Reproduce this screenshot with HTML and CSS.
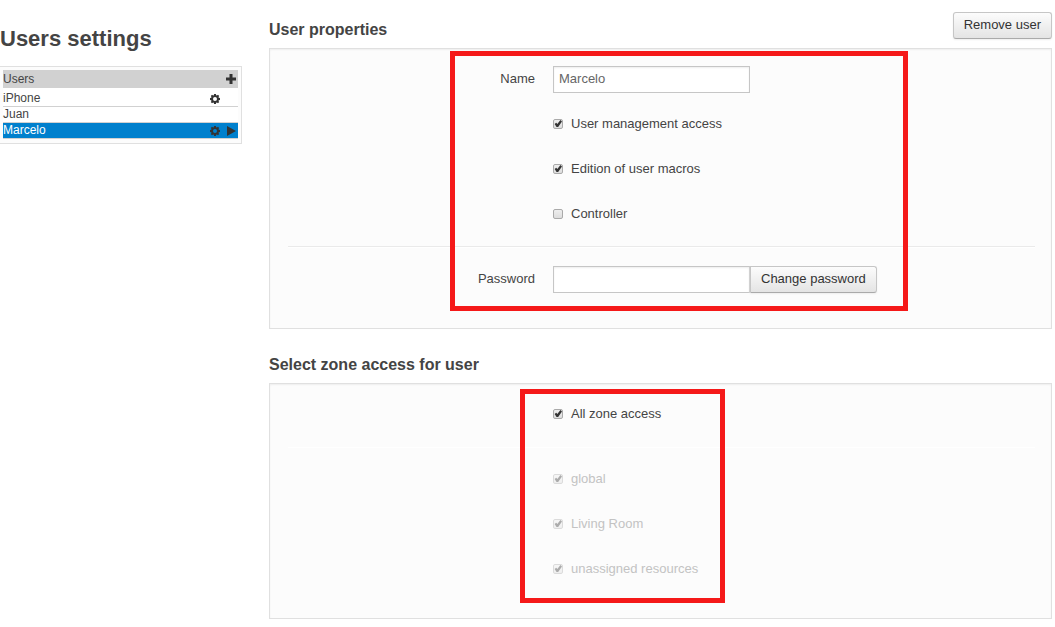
FILE: index.html
```
<!DOCTYPE html>
<html lang="en">
<head>
<meta charset="utf-8">
<title>Users settings</title>
<link rel="stylesheet" href="styles.css">
</head>
<body>
<svg class="defs" aria-hidden="true">
  <symbol id="gear" viewBox="0 0 10 10">
    <path fill="currentColor" fill-rule="evenodd" d="M4.1 0h1.8l.3 1.2.7.3 1.1-.7L9.2 2l-.7 1.1.3.7 1.2.3v1.8l-1.2.3-.3.7L9.2 8 8 9.200l-1.100-.7-.7.3L5.900 10H4.100l-.3-1.200-.7-.3L2 9.200.8 8l.7-1.100-.3-.7L0 5.900V4.100l1.200-.3.3-.7L.8 2 2 .8l1.100.7.7-.3zM5 3a2 2 0 1 0 0 4 2 2 0 0 0 0-4z"/>
  </symbol>
</svg>
<div class="layout">
  <aside class="sidebar">
    <h1 class="page-title">Users settings</h1>
    <div class="user-box">
      <div class="user-head">
        <span class="user-name">Users</span>
        <button class="icon-button" type="button" aria-label="Add user"><svg class="icon" viewBox="0 0 10 10"><path fill="currentColor" d="M3.500 0h3v3.500H10v3H6.500V10h-3V6.500H0v-3h3.500z"/></svg></button>
      </div>
      <ul class="user-list">
        <li class="user"><span class="user-name">iPhone</span><svg class="icon"><use href="#gear"/></svg><span class="icon"></span></li>
        <li class="user"><span class="user-name">Juan</span></li>
        <li class="user selected"><span class="user-name">Marcelo</span><svg class="icon"><use href="#gear"/></svg><svg class="icon" viewBox="0 0 10 10"><path fill="currentColor" d="M1 0l9 5-9 5z"/></svg></li>
      </ul>
    </div>
  </aside>
  <main class="content">
    <section class="section">
      <header class="section-head">
        <h2 class="section-title">User properties</h2>
        <button class="button" type="button">Remove user</button>
      </header>
      <form class="panel">
        <div class="row">
          <label class="label" for="name">Name</label>
          <input class="text" id="name" type="text" value="Marcelo">
        </div>
        <div class="row"><label class="option"><input class="check" type="checkbox" checked>User management access</label></div>
        <div class="row"><label class="option"><input class="check" type="checkbox" checked>Edition of user macros</label></div>
        <div class="row"><label class="option"><input class="check" type="checkbox">Controller</label></div>
        <hr class="rule">
        <div class="row">
          <label class="label" for="password">Password</label>
          <div class="group">
            <input class="text" id="password" type="password">
            <button class="button attached" type="button">Change password</button>
          </div>
        </div>
        <div class="highlight highlight-user"></div>
      </form>
    </section>
    <section class="section">
      <h2 class="section-title">Select zone access for user</h2>
      <form class="panel">
        <div class="row"><label class="option"><input class="check" type="checkbox" checked>All zone access</label></div>
        <hr class="rule faint">
        <div class="row"><label class="option disabled"><input class="check" type="checkbox" checked disabled>global</label></div>
        <div class="row"><label class="option disabled"><input class="check" type="checkbox" checked disabled>Living Room</label></div>
        <div class="row"><label class="option disabled"><input class="check" type="checkbox" checked disabled>unassigned resources</label></div>
        <div class="highlight highlight-zones"></div>
      </form>
    </section>
  </main>
</div>
</body>
</html>
```
FILE: styles.css
```
* { box-sizing: border-box; }
body {
  margin: 0;
  background: #fff;
  color: #444;
  font: 13px/18px "Liberation Sans", Arial, sans-serif;
}
.defs { position: absolute; width: 0; height: 0; }
.layout { display: flex; gap: 27px; padding: 12px 3px 9px 0; }
.sidebar { flex: 0 0 242px; padding-top: 13px; }
.page-title { margin: 0 0 13px; font-size: 22px; line-height: 28px; }
.user-box {
  padding: 3px 3px 4px;
  border: 1px solid #e0e0e0;
  border-left: 0;
  background: #fcfcfc;
  font-size: 12px;
  line-height: 15px;
}
.user-head, .user { display: flex; align-items: center; gap: 6px; padding-right: 2px; }
.user-head { height: 18px; background: #d1d1d1; }
.user-name { flex: 1; }
.user-list { margin: 0; padding: 3px 0 0; list-style: none; background: #fff; }
.user { border-bottom: 1px solid #d1d1d1; }
.user.selected { background: #0080cd; }
.user.selected .user-name { color: #fff; }
.icon { display: block; width: 10px; height: 10px; color: #333; }
.icon-button { padding: 0; border: 0; background: none; }
.content { flex: 1; min-width: 0; }
.section + .section { margin-top: 27px; }
.section-head { display: flex; justify-content: space-between; align-items: flex-end; }
.section-title { margin: 0 0 9px; font-size: 16px; line-height: 18px; }
.section-head .button { margin-bottom: 9px; }
.panel {
  position: relative;
  display: flex;
  flex-direction: column;
  gap: 18px;
  padding: 17px 16px 35px 18px;
  border: 1px solid #e0e0e0;
  background: #fcfcfc;
  box-shadow: inset 0 1px 2px #eee;
}
.row {
  display: grid;
  grid-template-columns: 247px 1fr;
  column-gap: 18px;
  align-items: center;
  justify-items: start;
  min-height: 27px;
}
.label { justify-self: end; padding-bottom: 2px; }
.option { grid-column: 2; display: flex; align-items: center; gap: 8px; padding-bottom: 2px; }
.rule {
  width: 100%;
  height: 2px;
  margin: 0;
  border: 0;
  border-top: 1px solid #eaeaea;
  background: #fff;
}
.rule.faint { border-color: #fcfcfc; }
.text {
  width: 197px;
  height: 27px;
  padding: 0 5px 2px;
  border: 1px solid #c6c6c6;
  background: #fff;
  box-shadow: inset 0 1px 2px #eee;
  color: #666;
  font: inherit;
}
.group { display: flex; }
.button {
  height: 27px;
  padding: 0 10px 2px;
  border: 1px solid #c6c6c6;
  border-bottom-color: #aaa;
  border-radius: 3px;
  background: linear-gradient(#fcfcfc, #e4e4e4);
  box-shadow: 0 1px 2px #eee;
  color: #333;
  font: inherit;
}
.attached { border-radius: 0 3px 3px 0; }
.check {
  appearance: none;
  display: grid;
  width: 10px;
  height: 10px;
  margin: 0;
  border: 1px solid #aaa;
  border-radius: 2px;
  background: linear-gradient(#eee, #ddd);
}
.check:checked::before {
  content: "";
  background: #333;
  clip-path: polygon(8% 56%, 28% 42%, 42% 56%, 80% 6%, 100% 24%, 52% 94%, 32% 94%);
}
.disabled { color: #c3c3c3; }
.disabled .check { opacity: 0.4; }
.highlight { position: absolute; border: 5px solid #f51919; pointer-events: none; }
.highlight-user { top: 2px; left: 180px; width: 458px; height: 260px; }
.highlight-zones { top: 5px; left: 250px; width: 205px; height: 214px; }
```
